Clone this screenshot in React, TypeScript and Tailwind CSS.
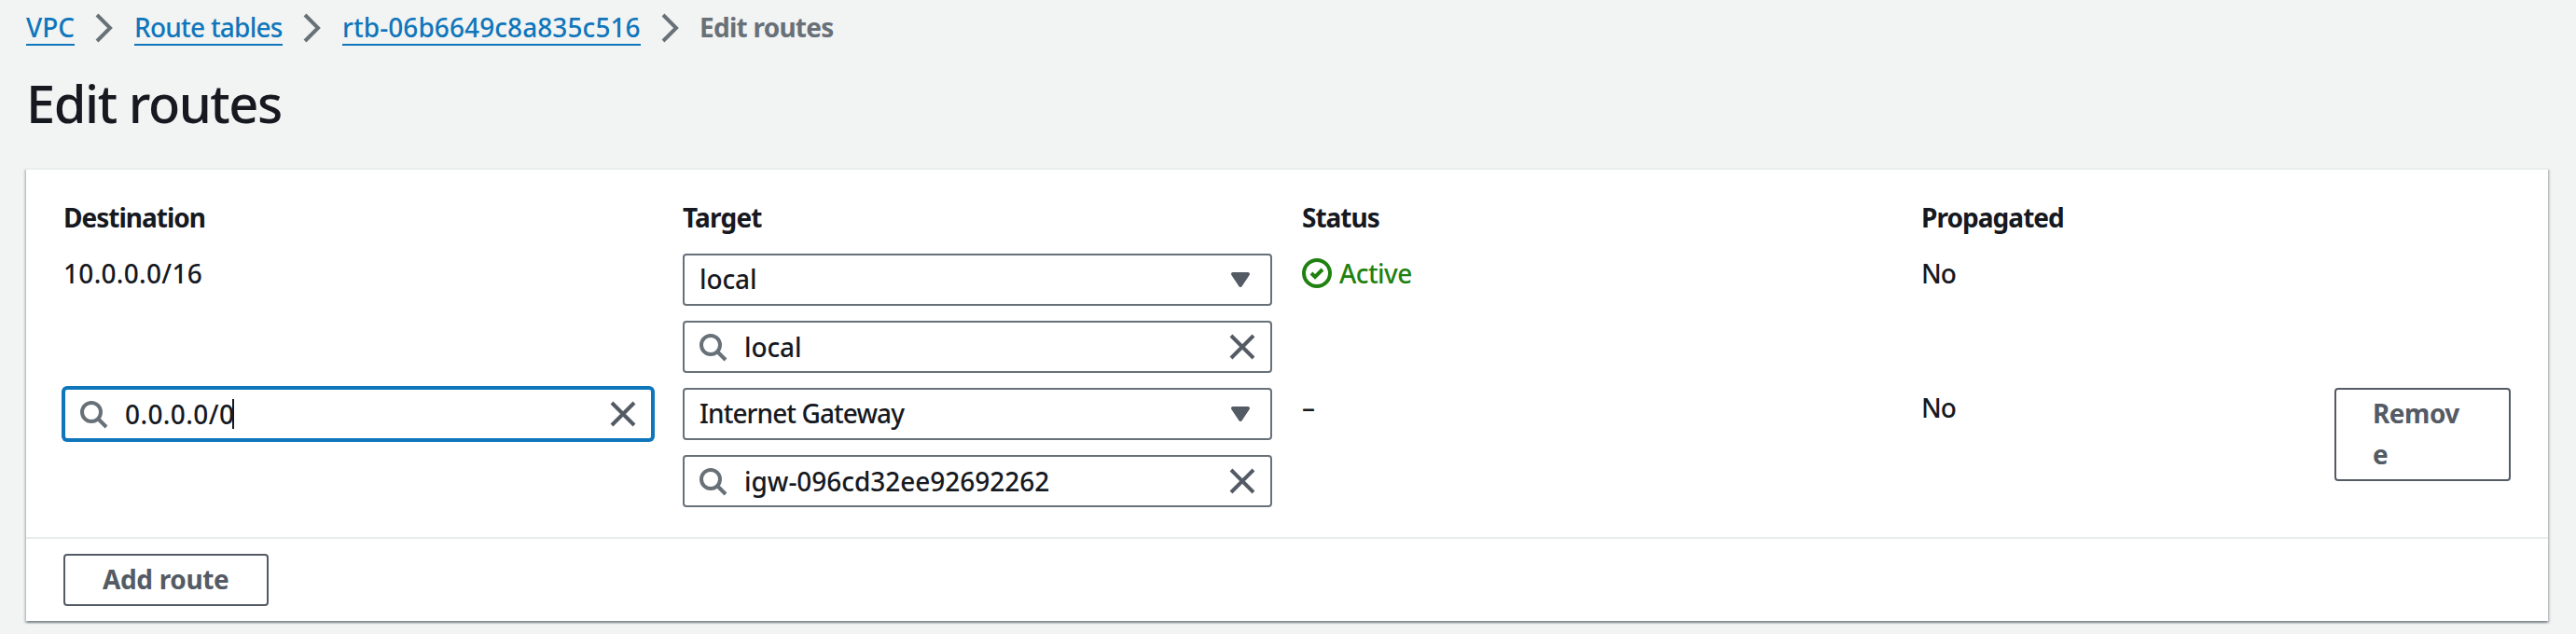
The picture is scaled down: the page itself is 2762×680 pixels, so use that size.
import type { ReactNode } from "react";
import clsx from "clsx";

function ChevronIcon() {
  return (
    <svg viewBox="0 0 32 32" className="mx-4 h-8 w-8 shrink-0" fill="none" stroke="#687078" strokeWidth="4">
      <path d="M8 2l14 14L8 30" />
    </svg>
  );
}

function SearchIcon() {
  return (
    <svg viewBox="0 0 32 32" className="h-8 w-8 shrink-0" fill="none" stroke="#687078" strokeWidth="4">
      <circle cx="14" cy="14" r="10" />
      <path d="M30 30l-9-9" />
    </svg>
  );
}

function CloseIcon() {
  return (
    <svg viewBox="0 0 32 32" className="h-8 w-8 shrink-0" fill="none" stroke="#545b64" strokeWidth="4">
      <path d="M4 4l24 24M28 4L4 28" />
    </svg>
  );
}

function CaretIcon() {
  return (
    <svg
      viewBox="0 0 32 32"
      className="mr-0.5 h-8 w-8 shrink-0"
      fill="#545b64"
      stroke="#545b64"
      strokeWidth="4"
      strokeLinejoin="round"
    >
      <path d="M8 10h16l-8 12z" />
    </svg>
  );
}

function StatusOkIcon() {
  return (
    <svg viewBox="0 0 32 32" className="h-8 w-8 shrink-0" fill="none" stroke="#1f8110" strokeWidth="4">
      <circle cx="16" cy="16" r="14" />
      <path d="M10 16l4 4 8-8" />
    </svg>
  );
}

function Crumb({ children, className }: { children: string; className?: string }) {
  return (
    <a href="#" className={clsx("-mt-1 h-[42px] border-b-2 border-[#0f76bb] whitespace-nowrap text-[#0f76bb]", className)}>
      {children}
    </a>
  );
}

function SelectField({ value, className }: { value: string; className?: string }) {
  return (
    <div className="flex h-14 items-center justify-between rounded-[4px] border-2 border-[#687078] bg-white px-3.5">
      <span className={clsx("-mt-0.5 pl-0.5", className)}>{value}</span>
      <CaretIcon />
    </div>
  );
}

function SearchField({ value, focused, className }: { value: string; focused?: boolean; className?: string }) {
  return (
    <div
      className={clsx(
        "flex h-14 items-center rounded-[4px] border-2 bg-white px-3.5",
        focused ? "border-[#0f76bb] shadow-[0_0_0_2px_#0f76bb]" : "border-[#687078]",
      )}
    >
      <SearchIcon />
      <div className="ml-[18px] flex flex-1 items-center">
        <span className={className}>{value}</span>
        {focused && <span className="-ml-0.5 h-8 w-0.5 bg-[#16191f]" />}
      </div>
      <CloseIcon />
    </div>
  );
}

function Button({ children, className }: { children: ReactNode; className?: string }) {
  return (
    <button
      type="button"
      className={clsx(
        "block rounded-[4px] border-2 border-[#545b64] bg-white pt-[3px] pb-[5px] text-left font-bold break-all text-[#545b64]",
        className,
      )}
    >
      {children}
    </button>
  );
}

const GRID = "grid grid-cols-[632px_632px_632px_411px_189px] gap-x-8";

export default function App() {
  return (
    <div className="h-[680px] w-[2762px] overflow-hidden bg-[#f2f3f3] pl-7 font-['Noto_Sans',sans-serif] text-[28px] leading-[44px] font-medium text-[#16191f]">
      <nav className="flex h-[60px] items-center">
        <div className="flex h-11 items-center">
          <Crumb className="w-[52px]">VPC</Crumb>
          <ChevronIcon />
          <Crumb className="w-[159px] tracking-[-0.76px]">Route tables</Crumb>
          <ChevronIcon />
          <Crumb className="w-[320px] tracking-[0.08px]">rtb-06b6649c8a835c516</Crumb>
          <ChevronIcon />
          <span className="-mt-0.5 -ml-px font-bold tracking-[-0.75px] text-[#687078]">Edit routes</span>
        </div>
      </nav>

      <h1 className="mt-3.5 text-[56px] leading-[72px] font-medium tracking-[-1.45px]">Edit routes</h1>

      <main className="mt-[34px] w-[2704px] border-t-2 border-[#eaeded] bg-white shadow-[0_2px_2px_0_rgba(0,28,36,0.3),2px_2px_2px_0_rgba(0,28,36,0.15),-2px_2px_2px_0_rgba(0,28,36,0.15)]">
        <section className="px-10 pt-[29px] pb-8">
          <div className={clsx(GRID, "mb-[17px] font-bold")}>
            <span className="tracking-[-1px]">Destination</span>
            <span className="tracking-[-0.8px]">Target</span>
            <span className="tracking-[-1px]">Status</span>
            <span className="tracking-[-0.95px]">Propagated</span>
          </div>

          <div className="flex flex-col gap-4">
            <div className={GRID}>
              <span className="-mt-px tracking-[0.3px]">10.0.0.0/16</span>
              <div className="flex flex-col gap-4">
                <SelectField value="local" className="tracking-[-0.1px]" />
                <SearchField value="local" className="tracking-[-0.1px]" />
              </div>
              <div className="-mt-px flex h-11 items-center gap-2 text-[#1f8110]">
                <StatusOkIcon />
                <span className="tracking-[-0.6px]">Active</span>
              </div>
              <span className="-mt-px tracking-[-0.9px]">No</span>
            </div>

            <div className={GRID}>
              <div>
                <SearchField value="0.0.0.0/0" focused className="tracking-[0.4px]" />
              </div>
              <div className="flex flex-col gap-4">
                <SelectField value="Internet Gateway" className="tracking-[-0.92px]" />
                <SearchField value="igw-096cd32ee92692262" className="tracking-[-0.04px]" />
              </div>
              <span className="-mt-px">–</span>
              <span className="-mt-px tracking-[-0.9px]">No</span>
              <div>
                <Button className="w-full px-[39px] tracking-[-0.5px]">Remove</Button>
              </div>
            </div>
          </div>
        </section>

        <footer className="border-t-2 border-[#eaeded] px-10 py-4">
          <Button className="w-[220px] px-10 whitespace-nowrap tracking-[-0.35px]">Add route</Button>
        </footer>
      </main>
    </div>
  );
}
